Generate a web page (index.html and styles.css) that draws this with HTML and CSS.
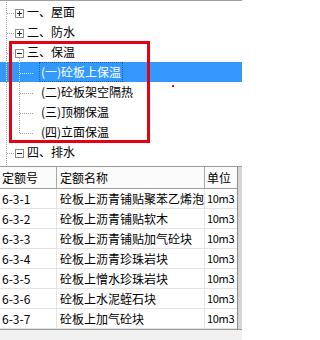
FILE: index.html
```html
<!DOCTYPE html>
<html lang="zh-CN">
<head>
<meta charset="utf-8">
<title>定额树</title>
<link rel="stylesheet" href="styles.css">
</head>
<body>
<div class="app">
  <div class="tree">
    <div class="row">
      <svg class="g g-top" width="25" height="20" viewBox="0 0 25 20"><path class="dot" d="M6.5 0V20M7 11.5H15"/><rect class="box" x="15.5" y="7.5" width="8" height="8"/><path class="sign" d="M17 11.5H22M19.5 9V14"/></svg>
      <span class="lbl">一、屋面</span>
    </div>
    <div class="row">
      <svg class="g g-top" width="25" height="20" viewBox="0 0 25 20"><path class="dot" d="M6.5 0V20M7 11.5H15"/><rect class="box" x="15.5" y="7.5" width="8" height="8"/><path class="sign" d="M17 11.5H22M19.5 9V14"/></svg>
      <span class="lbl">二、防水</span>
    </div>
    <div class="row">
      <svg class="g g-top" width="25" height="20" viewBox="0 0 25 20"><path class="dot" d="M6.5 0V20M7 11.5H15M19.5 16V20"/><rect class="box" x="15.5" y="7.5" width="8" height="8"/><path class="sign" d="M17 11.5H22"/></svg>
      <span class="lbl">三、保温</span>
    </div>
    <div class="row sel">
      <svg class="g g-child" width="39" height="20" viewBox="0 0 39 20"><path class="dot" d="M6.5 0V20M19.5 0V20M20 11.5H33"/></svg>
      <span class="lbl focus">(一)砼板上保温</span>
    </div>
    <div class="row">
      <svg class="g g-child" width="39" height="20" viewBox="0 0 39 20"><path class="dot" d="M6.5 0V20M19.5 0V20M20 11.5H33"/></svg>
      <span class="lbl">(二)砼板架空隔热</span>
    </div>
    <div class="row">
      <svg class="g g-child" width="39" height="20" viewBox="0 0 39 20"><path class="dot" d="M6.5 0V20M19.5 0V20M20 11.5H33"/></svg>
      <span class="lbl">(三)顶棚保温</span>
    </div>
    <div class="row">
      <svg class="g g-child" width="39" height="20" viewBox="0 0 39 20"><path class="dot" d="M6.5 0V20M19.5 0V11.5M20 11.5H33"/></svg>
      <span class="lbl">(四)立面保温</span>
    </div>
    <div class="row">
      <svg class="g g-top" width="25" height="20" viewBox="0 0 25 20"><path class="dot" d="M6.5 0V20M7 11.5H15"/><rect class="box" x="15.5" y="7.5" width="8" height="8"/><path class="sign" d="M17 11.5H22"/></svg>
      <span class="lbl">四、排水</span>
    </div>
    <div class="row">
      <svg class="g g-top" width="25" height="20" viewBox="0 0 25 20"><path class="dot" d="M6.5 0V20"/></svg>
    </div>
    <div class="mark"></div>
    <div class="speck"></div>
  </div>

  <div class="grid-wrap">
    <div class="grid">
      <div class="hd c1">定额号</div><div class="hd c2">定额名称</div><div class="hd c3">单位</div>
      <div class="td c1">6-3-1</div><div class="td c2">砼板上沥青铺贴聚苯乙烯泡</div><div class="td c3">10m3</div>
      <div class="td c1">6-3-2</div><div class="td c2">砼板上沥青铺贴软木</div><div class="td c3">10m3</div>
      <div class="td c1">6-3-3</div><div class="td c2">砼板上沥青铺贴加气砼块</div><div class="td c3">10m3</div>
      <div class="td c1">6-3-4</div><div class="td c2">砼板上沥青珍珠岩块</div><div class="td c3">10m3</div>
      <div class="td c1">6-3-5</div><div class="td c2">砼板上憎水珍珠岩块</div><div class="td c3">10m3</div>
      <div class="td c1">6-3-6</div><div class="td c2">砼板上水泥蛭石块</div><div class="td c3">10m3</div>
      <div class="td c1">6-3-7</div><div class="td c2">砼板上加气砼块</div><div class="td c3">10m3</div>
    </div>
    <div class="vscroll"></div>
  </div>
  <div class="footer"></div>
</div>
</body>
</html>
```

FILE: styles.css
```css
* { box-sizing: border-box; }
html, body { margin: 0; padding: 0; background: #fff; }
body {
  font-family: "Noto Sans CJK SC", "Noto Sans", sans-serif;
  font-size: 12px;
  color: #000;
}
.app { width: 242px; height: 340px; overflow: hidden; display: flex; flex-direction: column; }

.tree {
  position: relative;
  height: 166px;
  border-top: 1px solid #a0a0a0;
  padding-top: 1px;
  overflow: hidden;
  flex: none;
}
.row {
  display: flex;
  align-items: stretch;
  height: 20px;
  line-height: 20px;
  white-space: nowrap;
}
.row.sel { background: #3399ff; color: #fff; }
.g { display: block; flex: none; }
.dot { fill: none; stroke: #a0a0a0; stroke-width: 1; stroke-dasharray: 1 1; shape-rendering: crispEdges; }
.row.sel .dot { stroke: #d0e6ff; }
.box { fill: #fff; stroke: #8c8c8c; stroke-width: 1; shape-rendering: crispEdges; }
.sign { fill: none; stroke: #222; stroke-width: 1; shape-rendering: crispEdges; }
.lbl {
  display: block;
  padding: 0 1px;
  border: 1px solid transparent;
  height: 20px;
  line-height: 18px;
}
.lbl.focus { border: 1px dotted #1c5fb0; }

.mark {
  position: absolute;
  left: 9px;
  top: 40px;
  width: 141px;
  height: 102px;
  border: 3px solid #e60012;
  pointer-events: none;
}
.speck {
  position: absolute;
  left: 172px;
  top: 84px;
  width: 2px;
  height: 2px;
  background: #e60012;
}

.grid-wrap {
  display: flex;
  height: 164px;
  border-top: 1px solid #9a9a9a;
  border-bottom: 1px solid #9a9a9a;
  flex: none;
}
.grid {
  display: grid;
  grid-template-columns: 57px 148px 32px;
  grid-template-rows: 22px repeat(7, 20px);
  width: 237px;
  flex: none;
  overflow: hidden;
}
.hd, .td {
  white-space: nowrap;
  overflow: hidden;
  padding-left: 2px;
}
.hd {
  background: #fbfbfb;
  border-right: 1px solid #a8a8a8;
  border-bottom: 1px solid #a0a0a0;
  line-height: 21px;
}
.td {
  border-right: 1px solid #e4e4e4;
  border-bottom: 1px solid #e4e4e4;
  line-height: 19px;
}
.c2 { padding-left: 3px; }
.c3 { padding-left: 2px; border-right: none; }
.td.c3 { font-size: 11px; letter-spacing: -0.3px; }
.vscroll {
  flex: 1;
  background: #d6d6d6;
  border-left: 1px solid #8c8c8c;
}
.footer { flex: 1; background: #f0f0f0; }
```
